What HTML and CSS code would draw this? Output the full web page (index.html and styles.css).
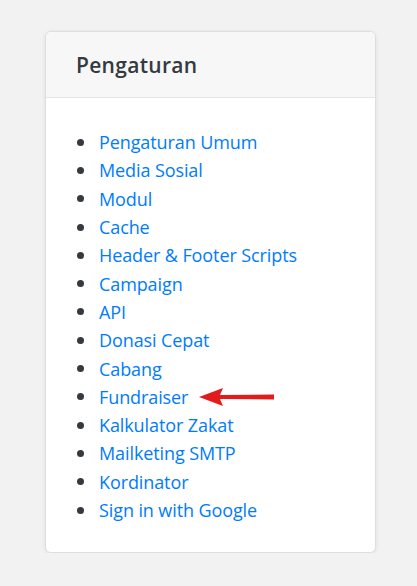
FILE: index.html
```html
<!DOCTYPE html>
<html lang="id">
<head>
<meta charset="utf-8">
<title>Pengaturan</title>
<link rel="stylesheet" href="styles.css">
</head>
<body>
<div class="card">
  <div class="card-header">
    <h2 class="card-title">Pengaturan</h2>
  </div>
  <div class="card-body">
    <ul class="menu">
      <li><a href="#">Pengaturan Umum</a></li>
      <li><a href="#">Media Sosial</a></li>
      <li><a href="#">Modul</a></li>
      <li><a href="#">Cache</a></li>
      <li><a href="#">Header &amp; Footer Scripts</a></li>
      <li><a href="#">Campaign</a></li>
      <li><a href="#">API</a></li>
      <li><a href="#">Donasi Cepat</a></li>
      <li><a href="#">Cabang</a></li>
      <li class="has-arrow"><a href="#">Fundraiser</a>
        <svg class="arrow" width="78" height="22" viewBox="0 0 78 22">
          <polygon points="0,11 24,2 21,9 75,8.5 75,13.5 21,13 24,20" fill="#e21b1b"/>
        </svg>
      </li>
      <li><a href="#">Kalkulator Zakat</a></li>
      <li><a href="#">Mailketing SMTP</a></li>
      <li><a href="#">Kordinator</a></li>
      <li><a href="#">Sign in with Google</a></li>
    </ul>
  </div>
</div>
</body>
</html>
```
FILE: styles.css
```css
html, body {
  margin: 0;
  padding: 0;
  background: #f2f2f2;
  font-family: "Open Sans", "Noto Sans", "Liberation Sans", sans-serif;
}
body {
  padding: 31px 0 0 45px;
}
.card {
  width: 331px;
  box-sizing: border-box;
  background: #fff;
  border: 1px solid #dedede;
  border-radius: 6px;
  box-shadow: 0 1px 4px rgba(0,0,0,0.08);
  overflow: hidden;
}
.card-header {
  background: #f7f7f7;
  border-bottom: 1px solid #e6e6e6;
  padding: 21px 30px 20px;
}
.card-title {
  margin: 0;
  font-size: 21px;
  line-height: 24px;
  font-weight: 600;
  color: #343a40;
  letter-spacing: 0.3px;
}
.card-body {
  padding: 30px 20px 28px 53px;
}
.menu {
  list-style: none;
  margin: 0;
  padding: 0;
}
.menu li {
  position: relative;
  display: flex;
  align-items: center;
  height: 28.3px;
  font-size: 18px;
  letter-spacing: -0.1px;
}
.menu li::before {
  content: "";
  width: 7px;
  height: 7px;
  border-radius: 50%;
  background: #343a40;
  margin: 0 15px 0 -22px;
  flex: none;
}
.menu a {
  color: #007bff;
  text-decoration: none;
}
.arrow {
  position: absolute;
  left: 100px;
  top: 3px;
}
```
